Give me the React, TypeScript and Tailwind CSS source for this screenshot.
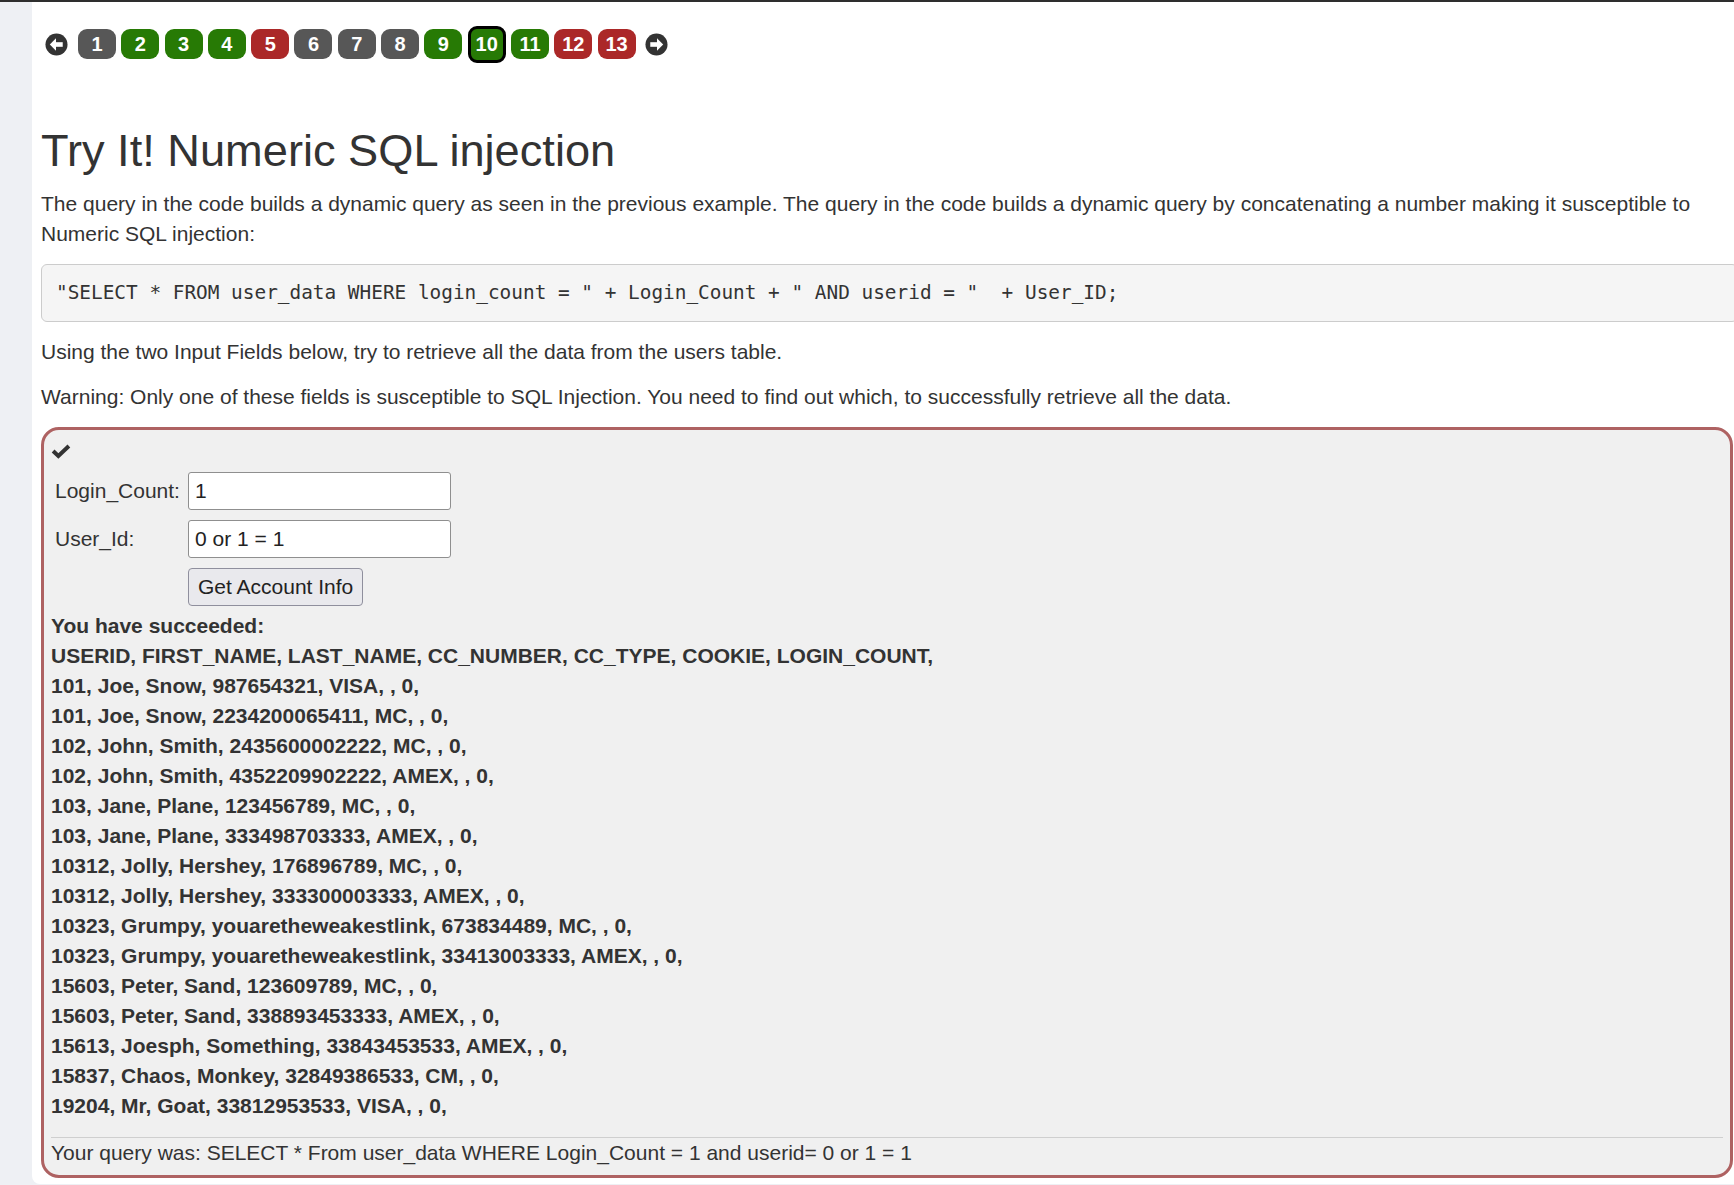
import React from "react";

type PageState = "todo" | "done" | "fail";

const PAGES: { n: number; state: PageState }[] = [
  { n: 1, state: "todo" },
  { n: 2, state: "done" },
  { n: 3, state: "done" },
  { n: 4, state: "done" },
  { n: 5, state: "fail" },
  { n: 6, state: "todo" },
  { n: 7, state: "todo" },
  { n: 8, state: "todo" },
  { n: 9, state: "done" },
  { n: 10, state: "done" },
  { n: 11, state: "done" },
  { n: 12, state: "fail" },
  { n: 13, state: "fail" },
];

const CURRENT = 10;

const ROWS = [
  "101, Joe, Snow, 987654321, VISA, , 0,",
  "101, Joe, Snow, 2234200065411, MC, , 0,",
  "102, John, Smith, 2435600002222, MC, , 0,",
  "102, John, Smith, 4352209902222, AMEX, , 0,",
  "103, Jane, Plane, 123456789, MC, , 0,",
  "103, Jane, Plane, 333498703333, AMEX, , 0,",
  "10312, Jolly, Hershey, 176896789, MC, , 0,",
  "10312, Jolly, Hershey, 333300003333, AMEX, , 0,",
  "10323, Grumpy, youaretheweakestlink, 673834489, MC, , 0,",
  "10323, Grumpy, youaretheweakestlink, 33413003333, AMEX, , 0,",
  "15603, Peter, Sand, 123609789, MC, , 0,",
  "15603, Peter, Sand, 338893453333, AMEX, , 0,",
  "15613, Joesph, Something, 33843453533, AMEX, , 0,",
  "15837, Chaos, Monkey, 32849386533, CM, , 0,",
  "19204, Mr, Goat, 33812953533, VISA, , 0,",
];

function ArrowCircle({ dir }: { dir: "left" | "right" }) {
  return (
    <svg width="23" height="23" viewBox="0 0 24 24" className={dir === "right" ? "rotate-180" : ""}>
      <circle cx="12" cy="12" r="11.5" fill="#333" />
      <polygon points="5,12 11.5,5.5 11.5,18.5" fill="#fff" />
      <rect x="10" y="9.6" width="8.5" height="4.8" fill="#fff" />
    </svg>
  );
}

function PageButton({ n, state }: { n: number; state: PageState }) {
  const bg =
    state === "done" ? "bg-[#277a05]" : state === "fail" ? "bg-[#ab2828]" : "bg-[#575757]";
  if (n === CURRENT) {
    return (
      <div
        className={`${bg} flex h-[37px] w-[38px] items-center justify-center rounded-[9px] border-[3.5px] border-black text-[20px] font-bold text-white`}
      >
        {n}
      </div>
    );
  }
  return (
    <div
      className={`${bg} flex h-[30px] w-[38px] items-center justify-center rounded-[9px] text-[20px] font-bold text-white`}
    >
      {n}
    </div>
  );
}

export default function App() {
  return (
    <div className="min-h-[1185px] overflow-hidden bg-[#eef0f4] font-['Liberation_Sans',Arial,sans-serif] text-[21px] leading-[30px] text-[#333]">
      <div className="h-[2px] bg-[#2e2e2e]" />
      <div className="ml-[32px] min-h-[1181px] rounded-bl-[8px] bg-white pt-[23px] pb-[6px] pl-[9px]">
        {/* page nav */}
        <div className="flex h-[38px] items-center pl-[4px]">
          <ArrowCircle dir="left" />
          <div className="ml-[10px] flex items-center gap-[5.3px]">
            {PAGES.map((p) => (
              <PageButton key={p.n} n={p.n} state={p.state} />
            ))}
          </div>
          <div className="ml-[9px]">
            <ArrowCircle dir="right" />
          </div>
        </div>

        <h2 className="mt-[63px] mb-[13px] text-[45.2px] leading-[49.5px] font-normal">
          Try It! Numeric SQL injection
        </h2>
        <p className="mb-[15px] w-[1693px]">
          The query in the code builds a dynamic query as seen in the previous example. The query in
          the code builds a dynamic query by concatenating a number making it susceptible to Numeric
          SQL injection:
        </p>
        <pre className="mb-[15px] mr-[-4px] rounded-[6px] border border-[#ccc] bg-[#f5f5f5] px-[14px] py-[14px] font-['DejaVu_Sans_Mono',monospace] text-[19.4px] leading-[28px] whitespace-pre text-[#333]">
          {'"SELECT * FROM user_data WHERE login_count = " + Login_Count + " AND userid = "  + User_ID;'}
        </pre>
        <p className="mb-[15px]">Using the two Input Fields below, try to retrieve all the data from the users table.</p>
        <p className="mb-[15px]">
          Warning: Only one of these fields is susceptible to SQL Injection. You need to find out
          which, to successfully retrieve all the data.
        </p>

        {/* attack form */}
        <div className="w-[1692px] rounded-[18px] border-[3px] border-[#ae6262] bg-[#f0f0f0] px-[7px] pt-[7px] pb-[7px]">
          <div className="flex h-[30px] items-center">
            <svg width="20" height="15" viewBox="0 0 19 14">
              <polyline points="2,6.5 7,11.2 17,1.8" fill="none" stroke="#333" strokeWidth="3.8" />
            </svg>
          </div>
          <div className="flex flex-col">
            <div className="flex h-[48px] items-center">
              <label className="w-[137px] pl-[4px]">Login_Count:</label>
              <input
                readOnly
                value="1"
                className="h-[38px] w-[263px] rounded-[3px] border border-[#8f8f8f] bg-white px-[6px] text-[21px] text-[#222] outline-none"
              />
            </div>
            <div className="flex h-[48px] items-center">
              <label className="w-[137px] pl-[4px]">User_Id:</label>
              <input
                readOnly
                value="0 or 1 = 1"
                className="h-[38px] w-[263px] rounded-[3px] border border-[#8f8f8f] bg-white px-[6px] text-[21px] text-[#222] outline-none"
              />
            </div>
            <div className="flex h-[48px] items-center">
              <div className="w-[137px]" />
              <button className="h-[38px] rounded-[4px] border border-[#8f8f9d] bg-[#e9e9ed] px-[9px] text-[21px] text-[#222]">
                Get Account Info
              </button>
            </div>
          </div>

          <div className="font-bold">
            <div>You have succeeded:</div>
            <div>USERID, FIRST_NAME, LAST_NAME, CC_NUMBER, CC_TYPE, COOKIE, LOGIN_COUNT,</div>
            {ROWS.map((r, i) => (
              <div key={i}>{r}</div>
            ))}
          </div>
          <hr className="mt-[16px] border-0 border-t border-[#cfcfcf]" />
          <div>Your query was: SELECT * From user_data WHERE Login_Count = 1 and userid= 0 or 1 = 1</div>
        </div>
      </div>
    </div>
  );
}
